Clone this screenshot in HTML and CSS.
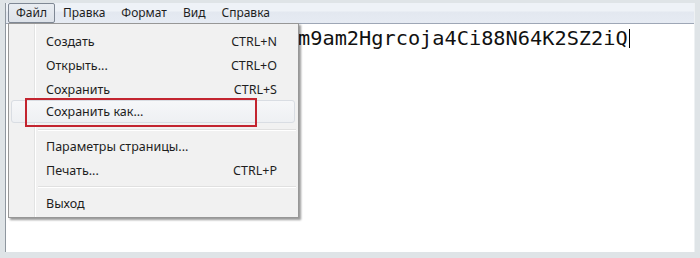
FILE: index.html
```html
<!DOCTYPE html>
<html lang="ru">
<head>
<meta charset="utf-8">
<title>Блокнот</title>
<link rel="stylesheet" href="styles.css">
</head>
<body>
<div class="window">
  <div class="menubar">
    <span class="mb-item active">Файл</span>
    <span class="mb-item">Правка</span>
    <span class="mb-item">Формат</span>
    <span class="mb-item">Вид</span>
    <span class="mb-item">Справка</span>
  </div>
  <div class="editor">
    <span class="text">m9am2Hgrcoja4Ci88N64K2SZ2iQ</span><span class="caret"></span>
  </div>
  <div class="dropdown">
    <div class="item"><span>Создать</span><span class="key">CTRL+N</span></div>
    <div class="item"><span>Открыть...</span><span class="key">CTRL+O</span></div>
    <div class="item"><span>Сохранить</span><span class="key">CTRL+S</span></div>
    <div class="item hover"><span>Сохранить как...</span><span class="mark"></span></div>
    <div class="sep"></div>
    <div class="item"><span>Параметры страницы...</span></div>
    <div class="item"><span>Печать...</span><span class="key">CTRL+P</span></div>
    <div class="sep"></div>
    <div class="item"><span>Выход</span></div>
  </div>
</div>
</body>
</html>
```
FILE: styles.css
```css
html, body {
  margin: 0;
  padding: 0;
}
body {
  background: #dfe4e7;
  width: 700px;
  height: 258px;
  overflow: hidden;
  font-family: "Noto Sans", "Open Sans", sans-serif;
  color: #1e1e1e;
}
.window {
  position: relative;
  margin: 3px 5px 0 5px;
  height: 249px;
  background: #ffffff;
  border-left: 1px solid #8f979f;
  border-right: 1px solid #eef1f3;
  box-sizing: border-box;
}
.menubar {
  height: 21px;
  display: flex;
  align-items: stretch;
  padding-left: 1px;
  background: linear-gradient(#eef2f7 0%, #eef2f7 40%, #e3e8f0 45%, #e6ebf3 100%);
  border-bottom: 1px solid #9ea7b6;
  box-sizing: border-box;
  font-size: 12px;
}
.mb-item {
  display: flex;
  align-items: center;
  padding: 0 7px;
  border: 1px solid transparent;
  border-radius: 2px;
  line-height: 1;
}
.mb-item.active {
  border-color: #7f8894;
  background: linear-gradient(#e9edf2, #dde2e9);
  margin-left: 1px;
}
.editor {
  padding: 3px 0 0 292px;
  font-family: "DejaVu Sans Mono", monospace;
  font-size: 20.3px;
  line-height: 23px;
  color: #111;
  display: flex;
  align-items: center;
}
.caret {
  display: inline-block;
  width: 1px;
  height: 19px;
  background: #000;
  margin-left: 1px;
}
.dropdown {
  position: absolute;
  left: 2px;
  top: 20px;
  width: 291px;
  box-sizing: border-box;
  padding: 5px 2px 2px 2px;
  border: 1px solid #979797;
  background:
    linear-gradient(90deg, transparent 25px, #e2e3e3 25px, #e2e3e3 26px, #ffffff 26px, #ffffff 27px, transparent 27px),
    #f1f1f1;
  box-shadow: 2px 2px 2px rgba(0, 0, 0, 0.4);
  font-size: 12.5px;
}
.item {
  position: relative;
  height: 24px;
  display: flex;
  align-items: center;
  justify-content: space-between;
  padding: 0 18px 0 34px;
  box-sizing: border-box;
  border: 1px solid transparent;
  border-radius: 3px;
}
.item.hover {
  border-color: #d9dde3;
  background: linear-gradient(#f6f7f9, #eef0f3);
  margin-top: -1px;
  height: 23px;
  margin-bottom: 2px;
  margin-right: 1px;
}
.mark {
  position: absolute;
  left: 13px;
  top: -3px;
  width: 232px;
  height: 29px;
  border: 2px solid #c3242f;
  box-sizing: border-box;
}
.sep {
  height: 9px;
  margin-left: 27px;
  background: linear-gradient(transparent 4px, #e0e0e0 4px, #e0e0e0 5px, #ffffff 5px, #ffffff 6px, transparent 6px);
}
```
